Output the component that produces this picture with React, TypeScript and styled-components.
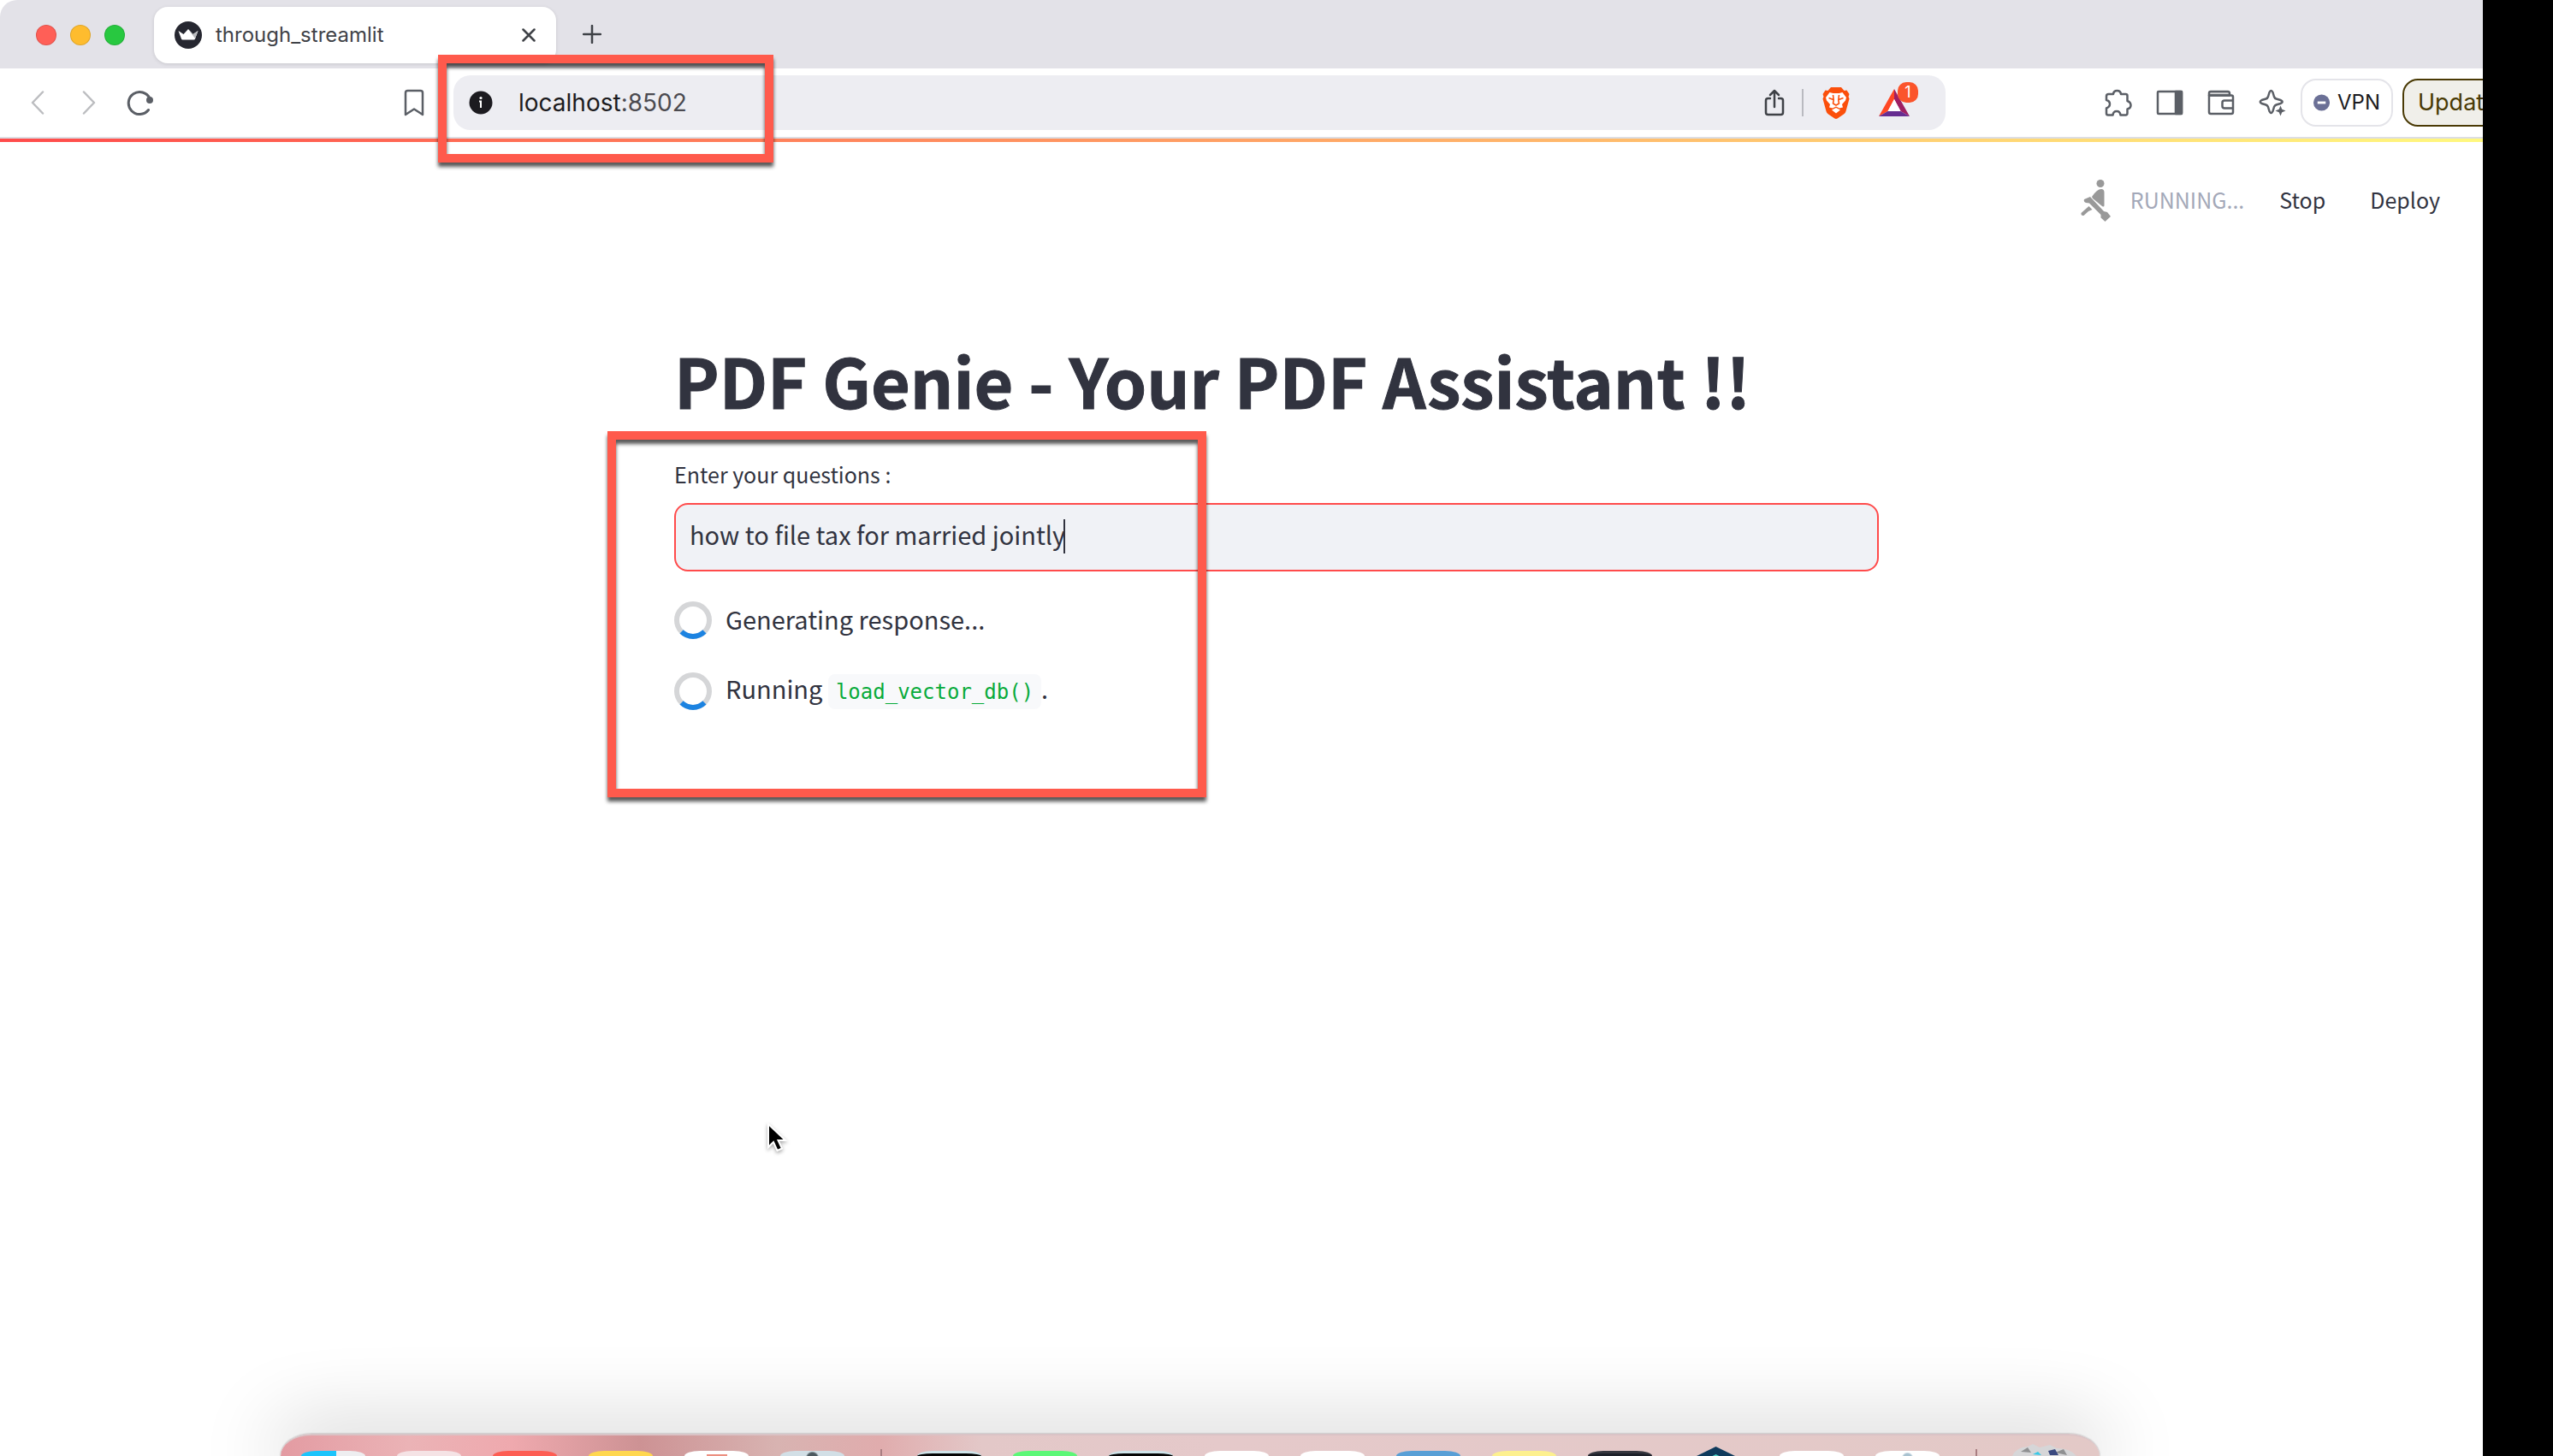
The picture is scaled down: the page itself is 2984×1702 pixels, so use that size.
import React from "react";
import styled, { createGlobalStyle } from "styled-components";

const sans = `"Noto Sans CJK SC", "Noto Sans", sans-serif`;
const ui = `Inter, "Liberation Sans", sans-serif`;
const mono = `"DejaVu Sans Mono", "Liberation Mono", monospace`;

const Global = createGlobalStyle`
  *, *::before, *::after { box-sizing: border-box; }
  html { background: #fff; }
  body { margin: 0; font-family: ${sans}; color: #31333f; }
  button, input { font: inherit; color: inherit; }
`;

const Desktop = styled.div`
  position: relative;
  min-height: 100vh;
  overflow: hidden;
  display: flex;
  flex-direction: column;
  border-radius: 20px 0 0 20px;
  background: #fff;
`;

const IconButton = styled.button<{ $w?: number }>`
  display: flex;
  align-items: center;
  justify-content: center;
  width: ${(p) => p.$w ?? 32}px;
  height: 40px;
  padding: 0;
  border: 0;
  background: none;
  color: #5b5f66;
  flex: none;
  svg { display: block; flex: none; }
`;

const TabStrip = styled.div`
  display: flex;
  align-items: flex-start;
  height: 80px;
  padding: 8px 0 0 42px;
  background: #e3e2e8;
`;
const Lights = styled.div`
  display: flex;
  gap: 16px;
  width: 138px;
  height: 66px;
  align-items: center;
`;
const Light = styled.button<{ $c: string }>`
  width: 24px;
  height: 24px;
  padding: 0;
  border: 1px solid rgba(0, 0, 0, 0.12);
  border-radius: 50%;
  background: ${(p) => p.$c};
`;
const Tab = styled.div`
  display: flex;
  align-items: center;
  width: 470px;
  height: 66px;
  padding: 0 16px 0 24px;
  gap: 16px;
  border-radius: 16px;
  background: #fff;
  box-shadow: 0 1px 4px rgba(0, 0, 0, 0.12);
  font: 24px/32px ${ui};
  color: #3f4247;
`;
const TabTitle = styled.span`
  flex: 1;
`;
const NewTab = styled(IconButton)`
  margin: 12px 0 0 26px;
`;

const Toolbar = styled.div`
  display: flex;
  align-items: center;
  height: 82px;
  padding: 0 0 0 28px;
  border-bottom: 2px solid #dddee3;
`;
const NavGroup = styled.div`
  display: flex;
  gap: 28px;
  flex: 1;
`;
const AddressBar = styled.div`
  display: flex;
  align-items: center;
  width: 1744px;
  height: 64px;
  margin-left: 32px;
  padding: 0 42px 0 18px;
  border-radius: 20px;
  background: #ededf2;
`;
const Url = styled.span`
  flex: 1;
  padding-left: 30px;
  font: 28px/40px ${ui};
  color: #1c1b20;
`;
const Port = styled.span`
  color: #4b4a50;
`;
const Divider = styled.span`
  width: 2px;
  height: 32px;
  margin: 0 22px 0 20px;
  background: #b9bac0;
`;
const BadgeWrap = styled.span`
  position: relative;
  display: flex;
  margin-left: 34px;
  width: 36px;
`;
const Badge = styled.span`
  position: absolute;
  left: 22px;
  top: -8px;
  width: 24px;
  height: 24px;
  border-radius: 10px;
  background: #fb542b;
  color: #fff;
  font: 18px/24px ${ui};
  text-align: center;
`;
const Extensions = styled.div`
  display: flex;
  align-items: center;
  justify-content: flex-end;
  gap: 28px;
  width: 398px;
`;
const Pill = styled.button<{ $warn?: boolean }>`
  display: flex;
  align-items: center;
  gap: 9px;
  flex: none;
  height: 56px;
  width: ${(p) => (p.$warn ? 176 : 108)}px;
  margin-left: ${(p) => (p.$warn ? 11 : 17)}px;
  padding: 0 ${(p) => (p.$warn ? 16 : 13)}px;
  border: ${(p) => (p.$warn ? "2px solid #4a3a05" : "2px solid #e4e4e9")};
  border-radius: 18px;
  background: ${(p) => (p.$warn ? "#f0efea" : "#fff")};
  color: ${(p) => (p.$warn ? "#4a3a05" : "#1c1b20")};
  font: ${(p) => (p.$warn ? 27 : 24)}px/32px ${ui};
`;

const Decoration = styled.div`
  height: 4px;
  background: linear-gradient(90deg, #ff4b4b, #fffd80);
`;
const AppHeader = styled.header`
  display: flex;
  justify-content: flex-end;
  align-items: center;
  height: 138px;
  padding-right: 132px;
  font-size: 25px;
  line-height: 40px;
`;
const Status = styled.span`
  margin-left: 22px;
  padding-bottom: 4px;
  color: #a3a8b8;
`;
const HeaderButton = styled.button<{ $gap: number }>`
  margin-left: ${(p) => p.$gap}px;
  padding: 0 0 4px;
  border: 0;
  background: none;
`;
const Main = styled.main`
  width: 1408px;
  margin: 0 auto;
  padding-top: 92px;
`;
const Title = styled.h1`
  margin: 0;
  font-size: 79px;
  font-weight: 700;
  line-height: 96px;
  -webkit-text-stroke: 1px currentColor;
`;
const Label = styled.label`
  display: block;
  margin-top: 42px;
  font-size: 25px;
  line-height: 40px;
`;
const Field = styled.div`
  position: relative;
  margin-top: 14px;
`;
const Question = styled.input`
  display: block;
  width: 100%;
  height: 80px;
  padding: 0 16px 8px;
  border: 2px solid #ff4b4b;
  border-radius: 16px;
  background: #f0f2f6;
  font-size: 29px;
  line-height: 40px;
  outline: none;
`;
const Caret = styled.span`
  position: absolute;
  left: 455px;
  top: 19px;
  width: 2px;
  height: 40px;
  background: #31333f;
`;
const SpinnerRow = styled.div`
  display: flex;
  align-items: center;
  gap: 16px;
  height: 44px;
  margin-top: 35px;
  font-size: 29px;
  line-height: 40px;
  & + & { margin-top: 39px; }
`;
const SpinnerText = styled.span`
  padding-bottom: 4px;
`;
const Code = styled.code`
  padding: 7px 9px 6px;
  border-radius: 8px;
  background: #f8f9fb;
  color: #09ab3b;
  font-family: ${mono};
  font-size: 24px;
`;

const Highlight = styled.div<{ $x: number; $y: number; $w: number; $h: number }>`
  position: absolute;
  left: ${(p) => p.$x}px;
  top: ${(p) => p.$y}px;
  width: ${(p) => p.$w}px;
  height: ${(p) => p.$h}px;
  border: 10px solid #ff5a4c;
  filter: drop-shadow(0 5px 2px rgba(0, 0, 0, 0.65));
  pointer-events: none;
`;
const Pointer = styled.svg`
  position: absolute;
  left: 892px;
  top: 1309px;
  filter: drop-shadow(0 2px 2px rgba(0, 0, 0, 0.35));
`;
const Blackout = styled.div`
  position: absolute;
  right: 0;
  top: 0;
  bottom: 0;
  width: 82px;
  background: #000;
`;
const Dock = styled.div`
  position: absolute;
  left: 328px;
  bottom: 0;
  width: 2126px;
  height: 26px;
  display: flex;
  align-items: flex-end;
  padding-left: 24px;
  border-top: 2px solid #d9c3c6;
  border-radius: 36px 36px 0 0 / 26px 26px 0 0;
  background: linear-gradient(90deg, #e39ba2 0, #ebb3b6 150px, #efa9ae 270px, #cd9294 420px, #d8b3b1 580px, #e0acad 700px, #e3c8c8 820px, #e5c9ca 1100px, #e3c9c7 100%);
  box-shadow: 0 0 90px 10px rgba(0, 0, 0, 0.22), 0 0 2px rgba(0, 0, 0, 0.4);
`;
const DockIcon = styled.span<{ $bg: string; $edge?: string }>`
  width: 75px;
  height: 6px;
  margin-right: 37px;
  flex: none;
  border-top: ${(p) => (p.$edge ? `3px solid ${p.$edge}` : "0")};
  border-radius: 18px 18px 0 0 / 6px 6px 0 0;
  background: ${(p) => p.$bg};
`;
const DockRule = styled.span`
  width: 2px;
  height: 8px;
  margin: 0 41px 0 5px;
  flex: none;
  background: #a97f82;
`;
const DockArt = styled.svg`
  flex: none;
  margin-right: 37px;
`;

const stroke = { fill: "none", stroke: "currentColor", strokeWidth: 2.5, strokeLinecap: "round", strokeLinejoin: "round" } as const;

const Spinner = () => (
  <svg width="44" height="44" viewBox="0 0 44 44">
    <circle cx="22" cy="22" r="19" fill="none" stroke="#d5d6d8" strokeWidth="6" />
    <path d="M8.6 35.4A19 19 0 0 0 35.4 35.4" fill="none" stroke="#1c83e1" strokeWidth="6" />
  </svg>
);

const dockLeft = ["linear-gradient(90deg,#1cc4fb 54%,#eeeef0 54%)", "#f5e3e5", "#fd5d53", "#ffd74f", "linear-gradient(90deg,#ec8f80,#ec8f80) 50% 100% / 24px 2px no-repeat #fff", "radial-gradient(circle at 50% 140%,#4d5a60 6px,#d2dfe6 8px)"];
const dockRight: [string, string?][] = [["#050505", "#cfe4ea"], ["#5cf777"], ["#050505", "#cfe4ea"], ["#fff"], ["#fff"], ["#589fd6"], ["#fdf08f"], ["#1d2029", "#35363e"]];

export default function App() {
  return (
    <Desktop>
      <Global />
      <TabStrip>
        <Lights>
          <Light $c="#ff5f57" aria-label="Close window" />
          <Light $c="#febc2e" aria-label="Minimise window" />
          <Light $c="#28c840" aria-label="Zoom window" />
        </Lights>
        <Tab>
          <svg width="32" height="32" viewBox="0 0 32 32">
            <circle cx="16" cy="16" r="16" fill="#262730" />
            <path d="M4.5 11l6 4L16 9l5.500 6 6-4-3.500 9.500q-.4 1-1.500 1h-13q-1.100 0-1.500-1z" fill="#fff" />
            <path d="M16 9l5.500 6 6-4-3.500 9z" fill="#b9babd" />
          </svg>
          <TabTitle>through_streamlit</TabTitle>
          <IconButton aria-label="Close tab">
            <svg width="16" height="16" viewBox="0 0 16 16" {...stroke} stroke="#3f4247"><path d="M1.500 1.500l13 13M14.500 1.500l-13 13" /></svg>
          </IconButton>
        </Tab>
        <NewTab aria-label="New tab">
          <svg width="22" height="22" viewBox="0 0 22 22" {...stroke} stroke="#3f4247"><path d="M11 1v20M1 11h20" /></svg>
        </NewTab>
      </TabStrip>

      <Toolbar>
        <NavGroup>
          <IconButton aria-label="Back">
            <svg width="16" height="28" viewBox="0 0 16 28" {...stroke} stroke="#bcbdc0"><path d="M14 1.500L2 14l12 12.500" /></svg>
          </IconButton>
          <IconButton aria-label="Forward">
            <svg width="16" height="28" viewBox="0 0 16 28" {...stroke} stroke="#bcbdc0"><path d="M2 1.500L14 14 2 26.500" /></svg>
          </IconButton>
          <IconButton aria-label="Reload">
            <svg width="32" height="30" viewBox="0 0 32 30" {...stroke} strokeWidth="3"><path d="M25.500 23.500A13 13 0 1 1 27 10" /><circle cx="27" cy="12" r="4" fill="currentColor" stroke="none" /></svg>
          </IconButton>
        </NavGroup>
        <IconButton aria-label="Bookmark" $w={28}>
          <svg width="24" height="32" viewBox="0 0 24 32" {...stroke}><path d="M2 4.500Q2 2 4.500 2h15Q22 2 22 4.500V30l-10-6.500L2 30z" /></svg>
        </IconButton>
        <AddressBar>
          <svg width="28" height="28" viewBox="0 0 28 28">
            <circle cx="14" cy="14" r="13.500" fill="#1c1b20" />
            <circle cx="14" cy="8.500" r="1.600" fill="#fff" />
            <path d="M12 12.500h2V20" fill="none" stroke="#fff" strokeWidth="2" />
          </svg>
          <Url>localhost<Port>:8502</Port></Url>
          <IconButton aria-label="Share" $w={24}>
            <svg width="24" height="32" viewBox="0 0 24 32" {...stroke} stroke="#3f4247"><path d="M7 11H4.500Q2 11 2 13.500v14Q2 30 4.500 30h15q2.500 0 2.500-2.500v-14Q22 11 19.500 11H17M12 21V2M7 7l5-5 5 5" /></svg>
          </IconButton>
          <Divider />
          <IconButton aria-label="Shields">
            <svg width="32" height="37" viewBox="0 0 32 37">
              <path d="M10 0h12l3.500 4 3-.5L31.500 8l-1 3 1 2.500-4 14.500q-.5 2-2.500 3.500L18 36.300q-2 1.200-4 0L7 31.500Q5 30 4.500 28L.5 13.500l1-2.500-1-3 3-4.500 3 .5z" fill="#fb4f0b" />
              <path d="M8.500 6l4 1h7l4-1 4.500 6-1 3.500L23 20l1 3.500-4 1-4-2-4 2-4-1L9 20l-4-4.500L4 12z" fill="#fff" />
              <path d="M16 24l5 2.500-5 4-5-4z" fill="#fff" />
              <path d="M7.500 12.500l5.500 2M24.500 12.500l-5.500 2M12.500 9l.7 6-.7 4 3.500 2 3.500-2-.7-4 .7-6" fill="none" stroke="#fb4f0b" strokeWidth="1.600" strokeLinejoin="round" />
            </svg>
          </IconButton>
          <BadgeWrap>
            <svg width="36" height="32" viewBox="0 0 36 32">
              <path d="M18 0L0 32l10.500-6L18 12z" fill="#ff4724" />
              <path d="M18 0l18 32-10.500-6L18 12z" fill="#9e1f63" />
              <path d="M0 32h36l-10.500-6h-15z" fill="#662d91" />
              <path d="M18 12l7.500 14h-15z" fill="#fff" />
            </svg>
            <Badge>1</Badge>
          </BadgeWrap>
        </AddressBar>
        <Extensions>
          <IconButton aria-label="Extensions">
            <svg width="32" height="32" viewBox="0 0 32 32" {...stroke}><path d="M4.500 6H10q.5-4 4.500-4T19 6h5.500Q26.500 6 26.500 8v6q4 1.500 4 5t-4 4.500V28q0 2.500-2 2.500H18.500q-.5-4.500-4.500-4.500t-4.500 4.500H4Q2 30.500 2 28.500V22.500Q6 21 6 17.500T2 13V8.500Q2 6 4.500 6z" /></svg>
          </IconButton>
          <IconButton aria-label="Sidebar">
            <svg width="32" height="30" viewBox="0 0 32 30" {...stroke}><rect x="2" y="2" width="28" height="26" rx="1" /><path d="M23 2h7v26h-7z" fill="currentColor" /></svg>
          </IconButton>
          <IconButton aria-label="Wallet">
            <svg width="32" height="30" viewBox="0 0 32 30" {...stroke}><path d="M2 6.500V4q0-2 2-2h20q2 0 2 2.500v2z" fill="#d4d5d7" /><path d="M2 6.500V26q0 2 2 2h24q2 0 2-2V8.500q0-2-2-2zM30 12.500H20q-2.500 0-2.500 2.500v4q0 2.500 2.500 2.500h10" /></svg>
          </IconButton>
          <IconButton aria-label="Assistant">
            <svg width="32" height="32" viewBox="0 0 32 32" {...stroke}><path d="M12.500 4Q14.500 0 16.500 4l1.500 5q.7 2 2.500 2.500l5 1.500q4.500 2 0 4l-5 1.500q-1.800.7-2.500 2.500l-1.500 5q-2 4-4 0L11 21q-.7-1.800-2.500-2.500l-5-1.500q-3.500-2 0-4l5-1.500Q10.300 11 11 9z" /><path d="M25.500 19.500l1.800 4.200 4.200 1.800-4.200 1.800-1.800 4.200-1.800-4.200-4.200-1.800 4.200-1.800z" fill="currentColor" stroke="none" /></svg>
          </IconButton>
        </Extensions>
        <Pill>
          <svg width="20" height="20" viewBox="0 0 20 20"><circle cx="10" cy="10" r="10" fill="#6b7096" /><path d="M5 10h10" stroke="#fff" strokeWidth="3" /></svg>
          VPN
        </Pill>
        <Pill $warn>Update</Pill>
      </Toolbar>

      <Decoration />
      <AppHeader>
        <svg width="36" height="50" viewBox="0 0 36 50" fill="#999">
          <circle cx="23" cy="4.500" r="4.500" />
          <path d="M13 20Q19 11 24 11q3.500 0 3.500 4v15q0 2.500-2.500 1L14 22z" />
          <path d="M4 23l7-3 16 17 4 1 4 5-6.500 6-5-4.500V41L10 27.500l-4-.5q-3-1-2-4z" />
          <path d="M9.500 31l4 4-4.500 2-5.500 5q-3.500.5-3-3z" />
        </svg>
        <Status>RUNNING...</Status>
        <HeaderButton $gap={41}>Stop</HeaderButton>
        <HeaderButton $gap={52}>Deploy</HeaderButton>
      </AppHeader>

      <Main>
        <Title>PDF Genie - Your PDF Assistant !!</Title>
        <Label htmlFor="question">Enter your questions :</Label>
        <Field>
          <Question id="question" type="text" defaultValue="how to file tax for married jointly" />
          <Caret />
        </Field>
        <SpinnerRow><Spinner /><SpinnerText>Generating response...</SpinnerText></SpinnerRow>
        <SpinnerRow><Spinner /><SpinnerText>Running <Code>load_vector_db()</Code>.</SpinnerText></SpinnerRow>
      </Main>

      <Dock>
        {dockLeft.map((bg) => <DockIcon key={bg} $bg={bg} />)}
        <DockRule />
        {dockRight.map(([bg, edge], i) => <DockIcon key={i} $bg={bg} $edge={edge} />)}
        <DockArt width="75" height="11" viewBox="0 0 75 11"><path d="M37.500 0L60 11H15z" fill="#0f3a5c" /><path d="M37.500 9l4 2h-8z" fill="#4fd1c5" /></DockArt>
        <DockIcon $bg="#fff" />
        <DockIcon $bg="radial-gradient(circle at 50% 140%,#a9c2d0 5px,#fff 7px)" />
        <DockRule />
        <DockArt width="75" height="14" viewBox="0 0 75 14">
          <path d="M0 14Q4 4 18 3l6-3 8 4 12-3 8 4q16 0 23 9z" fill="#d6d6d8" />
          <path d="M10 9l8-5 4 6zM50 10l10-4 4 7z" fill="#8f9092" />
          <path d="M24 12l6-3 4 4z" fill="#35c9e8" />
          <path d="M42 8l8-2 4 7h-10z" fill="#3b4a80" />
        </DockArt>
      </Dock>
      <Highlight $x={512} $y={64} $w={392} $h={126} />
      <Highlight $x={710} $y={504} $w={700} $h={428} />
      <Pointer width="32" height="40" viewBox="0 0 32 40">
        <path d="M6 5v27l6-6 4.500 10 5.500-2.500L17.500 24H26z" fill="#000" stroke="#fff" strokeWidth="2" />
      </Pointer>
      <Blackout />
    </Desktop>
  );
}
